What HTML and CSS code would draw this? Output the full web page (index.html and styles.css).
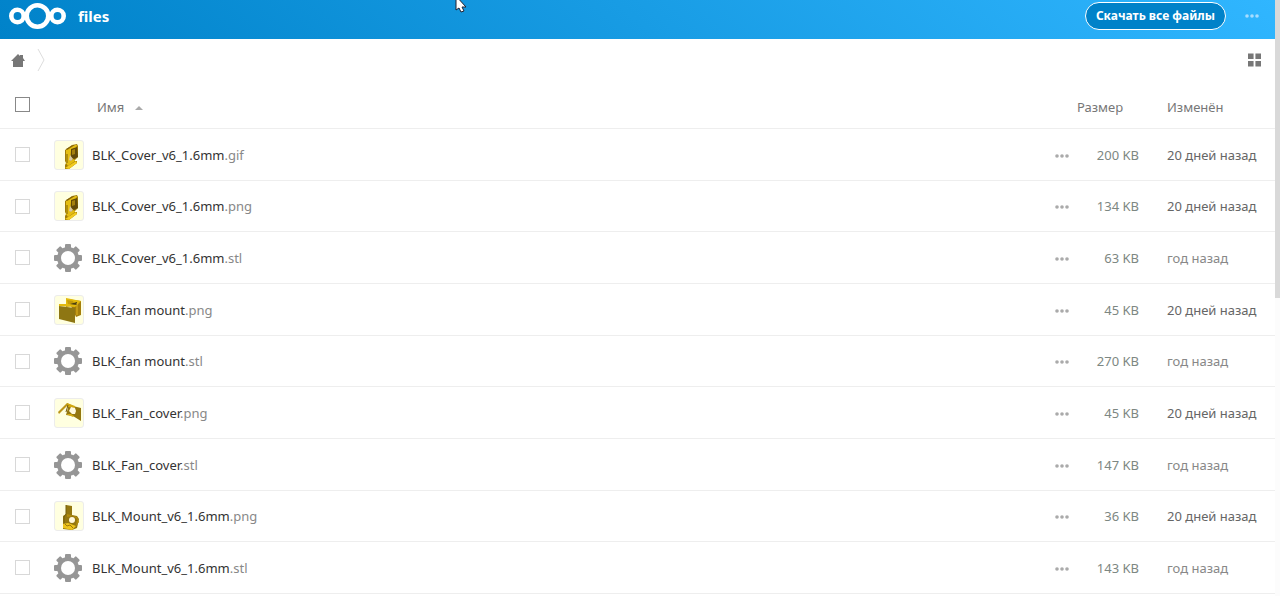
FILE: index.html
```html
<!DOCTYPE html>
<html lang="ru">
<head>
<meta charset="utf-8">
<title>files</title>
<link rel="stylesheet" href="styles.css">
</head>
<body>
<svg class="sprites" aria-hidden="true">
  <symbol id="gear" viewBox="0 0 28 28">
    <g fill="#969696">
      <rect id="tooth" x="11" y="0" width="6" height="28" rx="1"/>
      <use href="#tooth" transform="rotate(90 14 14)"/>
      <rect x="11" y="0" width="6" height="28" rx="1" transform="rotate(45 14 14)"/>
      <rect x="11" y="0" width="6" height="28" rx="1" transform="rotate(135 14 14)"/>
      <circle cx="14" cy="14" r="11"/>
    </g>
    <circle cx="14" cy="14" r="7" fill="#fff"/>
  </symbol>
  <symbol id="cover" viewBox="0 0 28 28">
    <path d="M10 9 17 4 22 3 23 5 23 16 19 20 22 20 22 22 14 28 10 28 10 24 11 22 10 20Z" fill="#a07c08"/>
    <path d="M11 9 18 4 22 4 21 7 16 9 15 20 19 18 20 20 13 25 11 22Z" fill="#e4bd12"/>
    <path d="M16 8 22 6 23 16 19 18 16 16Z" fill="#634b08"/>
    <path d="M17 9 20 8V13L17 14Z" fill="#a5800d"/>
    <path d="M11 8 18 4 20 4 12 9Z" fill="#80600a"/>
    <path d="M12 13V22" stroke="#7d6009"/>
    <path d="M15 14 18 18 16 20 14 19Z" fill="#d8c8a1"/>
    <path d="M10 27 21 20 22 22 14 28Z" fill="#f1cb20"/>
    <path d="M15 28 23 22V28Z" fill="#ffffe0"/>
  </symbol>
  <symbol id="fan" viewBox="0 0 28 28">
    <path d="M12 3 26 5V19L21 21 16 10 11 11Z" fill="#a57e0b"/>
    <path d="M11 2 26 5 20 11 4 10 4 8 11 8Z" fill="#e2b90c"/>
    <path d="M12 4 18 5 20 9 13 8Z" fill="#c39a0b"/>
    <path d="M15 8 22 6 22 9Z" fill="#493f13"/>
    <path d="M22 7V19" stroke="#e0b623" stroke-width="1"/>
    <path d="M4 10 20 12V27L4 23Z" fill="#8e7613"/>
  </symbol>
  <symbol id="plate" viewBox="0 0 28 28">
    <path d="M3 13 12 4 13 6 4 15Z" fill="#bc9519"/>
    <path d="M12 4 18 7 26 9 26 22 18 17 11 16 13 9Z" fill="#94770f"/>
    <path d="M12 4 20 7 20 9 13 8Z" fill="#d2a80d"/>
    <path d="M11 15 16 15 19 17 18 18Z" fill="#d6ae13"/>
    <path d="M16 8 20 9 21 12 20 15 17 15 14 12Z" fill="#fff9dc"/>
    <path d="M13 6 11 13" stroke="#705a0b"/>
  </symbol>
  <symbol id="mount" viewBox="0 0 28 28">
    <path d="M11 3 17 4 17 13 22 14 24 17 22 26 17 28 8 27 8 14 11 12Z" fill="#94780f"/>
    <path d="M8 22 13 21 21 24 17 28 8 26Z" fill="#edc51a"/>
    <path d="M12 12 22 15 24 20 21 24 22 17 18 14 12 15Z" fill="#b18c0b"/>
    <circle cx="17" cy="18" r="3" fill="#fff8d9"/>
    <path d="M10 22 12 24 15 23 18 26" stroke="#9e7908" fill="none"/>
    <path d="M11 3V12L9 15V21" stroke="#75600d" fill="none"/>
  </symbol>
  <symbol id="dots" viewBox="0 0 14 4">
    <circle cx="2" cy="2" r="1.8"/><circle cx="7" cy="2" r="1.8"/><circle cx="12" cy="2" r="1.8"/>
  </symbol>
</svg>

<div class="app">
  <header class="topbar">
    <a class="brand" href="#">
      <svg class="logo" viewBox="0 0 58 28" aria-hidden="true">
        <g fill="none" stroke="#fff" stroke-width="4.6">
          <circle cx="9.5" cy="14" r="6.2"/><circle cx="29.5" cy="14" r="10.8"/><circle cx="49.5" cy="14" r="6.2"/>
        </g>
      </svg>
      <span>files</span>
    </a>
    <div class="topbar-actions">
      <button class="download" type="button">Скачать все файлы</button>
      <button class="icon-button more" type="button" aria-label="Ещё"><svg class="dots"><use href="#dots"/></svg></button>
    </div>
  </header>

  <nav class="crumbs" aria-label="Путь">
    <a class="home" href="#" aria-label="Домой">
      <svg class="home-icon" viewBox="0 0 14 13"><path d="M7 0 9 2V1H12V4L14 7H12V13H2V7H0Z" fill="#777"/></svg>
    </a>
    <svg class="chevron" viewBox="0 0 8 24" aria-hidden="true"><path d="M1 1 7 12 1 23" fill="none" stroke="#ddd"/></svg>
    <button class="icon-button grid-toggle" type="button" aria-label="Сетка">
      <svg class="grid-icon" viewBox="0 0 14 14"><path d="M0 0H6V6H0ZM8 0H14V6H8ZM0 8H6V14H0ZM8 8H14V14H8Z" fill="#777"/></svg>
    </button>
  </nav>

  <table class="files">
    <colgroup><col class="c-check"><col class="c-thumb"><col class="c-name"><col class="c-menu"><col class="c-size"><col class="c-date"></colgroup>
    <thead>
      <tr>
        <th class="check"><input type="checkbox" aria-label="Выбрать все"></th>
        <th></th>
        <th class="name">Имя <svg class="sort" viewBox="0 0 8 4" aria-hidden="true"><path d="M0 4 4 0 8 4Z" fill="#aaa"/></svg></th>
        <th></th>
        <th class="size">Размер</th>
        <th class="date">Изменён</th>
      </tr>
    </thead>
    <tbody>
      <tr><td class="check"><input type="checkbox" aria-label="BLK_Cover_v6_1.6mm.gif"></td><td class="thumb"><svg class="preview"><use href="#cover"/></svg></td><td class="name"><a href="#">BLK_Cover_v6_1.6mm<span class="ext">.gif</span></a></td><td class="menu"><button class="icon-button" type="button" aria-label="Действия"><svg class="dots"><use href="#dots"/></svg></button></td><td class="size">200 KB</td><td class="date recent">20 дней назад</td></tr>
      <tr><td class="check"><input type="checkbox" aria-label="BLK_Cover_v6_1.6mm.png"></td><td class="thumb"><svg class="preview"><use href="#cover"/></svg></td><td class="name"><a href="#">BLK_Cover_v6_1.6mm<span class="ext">.png</span></a></td><td class="menu"><button class="icon-button" type="button" aria-label="Действия"><svg class="dots"><use href="#dots"/></svg></button></td><td class="size">134 KB</td><td class="date recent">20 дней назад</td></tr>
      <tr><td class="check"><input type="checkbox" aria-label="BLK_Cover_v6_1.6mm.stl"></td><td class="thumb"><svg class="gear"><use href="#gear"/></svg></td><td class="name"><a href="#">BLK_Cover_v6_1.6mm<span class="ext">.stl</span></a></td><td class="menu"><button class="icon-button" type="button" aria-label="Действия"><svg class="dots"><use href="#dots"/></svg></button></td><td class="size">63 KB</td><td class="date">год назад</td></tr>
      <tr><td class="check"><input type="checkbox" aria-label="BLK_fan mount.png"></td><td class="thumb"><svg class="preview"><use href="#fan"/></svg></td><td class="name"><a href="#">BLK_fan mount<span class="ext">.png</span></a></td><td class="menu"><button class="icon-button" type="button" aria-label="Действия"><svg class="dots"><use href="#dots"/></svg></button></td><td class="size">45 KB</td><td class="date recent">20 дней назад</td></tr>
      <tr><td class="check"><input type="checkbox" aria-label="BLK_fan mount.stl"></td><td class="thumb"><svg class="gear"><use href="#gear"/></svg></td><td class="name"><a href="#">BLK_fan mount<span class="ext">.stl</span></a></td><td class="menu"><button class="icon-button" type="button" aria-label="Действия"><svg class="dots"><use href="#dots"/></svg></button></td><td class="size">270 KB</td><td class="date">год назад</td></tr>
      <tr><td class="check"><input type="checkbox" aria-label="BLK_Fan_cover.png"></td><td class="thumb"><svg class="preview"><use href="#plate"/></svg></td><td class="name"><a href="#">BLK_Fan_cover<span class="ext">.png</span></a></td><td class="menu"><button class="icon-button" type="button" aria-label="Действия"><svg class="dots"><use href="#dots"/></svg></button></td><td class="size">45 KB</td><td class="date recent">20 дней назад</td></tr>
      <tr><td class="check"><input type="checkbox" aria-label="BLK_Fan_cover.stl"></td><td class="thumb"><svg class="gear"><use href="#gear"/></svg></td><td class="name"><a href="#">BLK_Fan_cover<span class="ext">.stl</span></a></td><td class="menu"><button class="icon-button" type="button" aria-label="Действия"><svg class="dots"><use href="#dots"/></svg></button></td><td class="size">147 KB</td><td class="date">год назад</td></tr>
      <tr><td class="check"><input type="checkbox" aria-label="BLK_Mount_v6_1.6mm.png"></td><td class="thumb"><svg class="preview"><use href="#mount"/></svg></td><td class="name"><a href="#">BLK_Mount_v6_1.6mm<span class="ext">.png</span></a></td><td class="menu"><button class="icon-button" type="button" aria-label="Действия"><svg class="dots"><use href="#dots"/></svg></button></td><td class="size">36 KB</td><td class="date recent">20 дней назад</td></tr>
      <tr><td class="check"><input type="checkbox" aria-label="BLK_Mount_v6_1.6mm.stl"></td><td class="thumb"><svg class="gear"><use href="#gear"/></svg></td><td class="name"><a href="#">BLK_Mount_v6_1.6mm<span class="ext">.stl</span></a></td><td class="menu"><button class="icon-button" type="button" aria-label="Действия"><svg class="dots"><use href="#dots"/></svg></button></td><td class="size">143 KB</td><td class="date">год назад</td></tr>
    </tbody>
  </table>
</div>
<div class="scroll-track"><div class="scroll-thumb"></div></div>

<svg class="pointer" viewBox="0 0 12 16" aria-hidden="true"><path d="M1 -4V10L4 8 6 12 9 11 7 7H11Z" fill="#fff" stroke="#223" stroke-width="1"/></svg>
</body>
</html>
```

FILE: styles.css
```css
* { box-sizing: border-box; }

body {
  margin: 0;
  min-height: 100vh;
  display: flex;
  background: #fff;
  color: #777;
  font: 13px/20px "Noto Sans", "Open Sans", sans-serif;
}

a { color: inherit; text-decoration: none; }
svg { display: block; }

.sprites { position: absolute; width: 0; height: 0; }

.app { flex: 1; min-width: 0; }

.topbar {
  display: flex;
  align-items: flex-start;
  justify-content: space-between;
  height: 39px;
  padding: 2px 16px 0 8px;
  background: linear-gradient(40deg, #0082c9 0%, #30b6ff 100%);
}

.brand {
  display: flex;
  align-items: center;
  gap: 12px;
  color: #fff;
  font-size: 15px;
  font-weight: 700;
}

.logo { width: 58px; height: 28px; }

.topbar-actions { display: flex; align-items: center; gap: 19px; }

.download {
  height: 28px;
  padding: 0 10px;
  border: 1px solid #fff;
  border-radius: 14px;
  background: #0082c9;
  color: #fff;
  font: 700 12px/20px "Noto Sans", "Open Sans", sans-serif;
}

.icon-button { display: block; padding: 0; border: 0; background: none; }
.dots { width: 14px; height: 4px; fill: #aaa; }
.more .dots { fill: #a6ddff; }

.crumbs {
  display: flex;
  align-items: center;
  height: 42px;
  padding: 0 14px 0 11px;
}

.home-icon { width: 14px; height: 13px; }
.chevron { width: 8px; height: 24px; margin-left: 12px; }
.grid-toggle { margin-left: auto; }
.grid-icon { width: 13px; height: 14px; }

.files {
  width: 100%;
  table-layout: fixed;
  border-collapse: separate;
  border-spacing: 0;
}

.c-check { width: 53px; }
.c-thumb { width: 39px; }
.c-menu { width: 22px; }
.c-size { width: 76px; }
.c-date { width: 122px; }

th, td {
  height: 52px;
  padding: 0;
  border-bottom: 1px solid #eee;
  text-align: left;
  font-weight: 400;
  vertical-align: middle;
}

tbody tr:nth-child(3n + 2) td { height: 51px; }
th { height: 48px; padding-top: 4px; }

.check { padding-left: 15px; }

.check input {
  display: block;
  appearance: none;
  width: 15px;
  height: 15px;
  margin: 0;
  border: 1px solid #d8d8d8;
  background: #fff;
}

th.check { padding-top: 0; }
th.check input { border-color: #888; }

.preview {
  width: 30px;
  height: 30px;
  margin-left: 1px;
  border: 1px solid #ececec;
  border-radius: 3px;
  background: #ffffe0;
}

.gear { width: 28px; height: 28px; margin-left: 1px; }

td.menu { padding-top: 2px; }
td.name { color: #333; }
th.name { padding-left: 5px; }
.sort { display: inline-block; width: 8px; height: 4px; margin-left: 7px; vertical-align: middle; }
.ext { color: #888; }

.size { text-align: right; }
td.size { padding-right: 14px; color: #7d8782; }
th.size { padding-right: 34px; }
.date { padding-left: 14px; white-space: nowrap; }
td.date { color: #888; }
td.recent { color: #666; }

.scroll-track { width: 5px; background: #fcfcfc; }
.scroll-thumb { height: 50vh; background: #d9d9d9; }

.pointer { position: absolute; top: 0; left: 455px; width: 12px; height: 16px; }
```
